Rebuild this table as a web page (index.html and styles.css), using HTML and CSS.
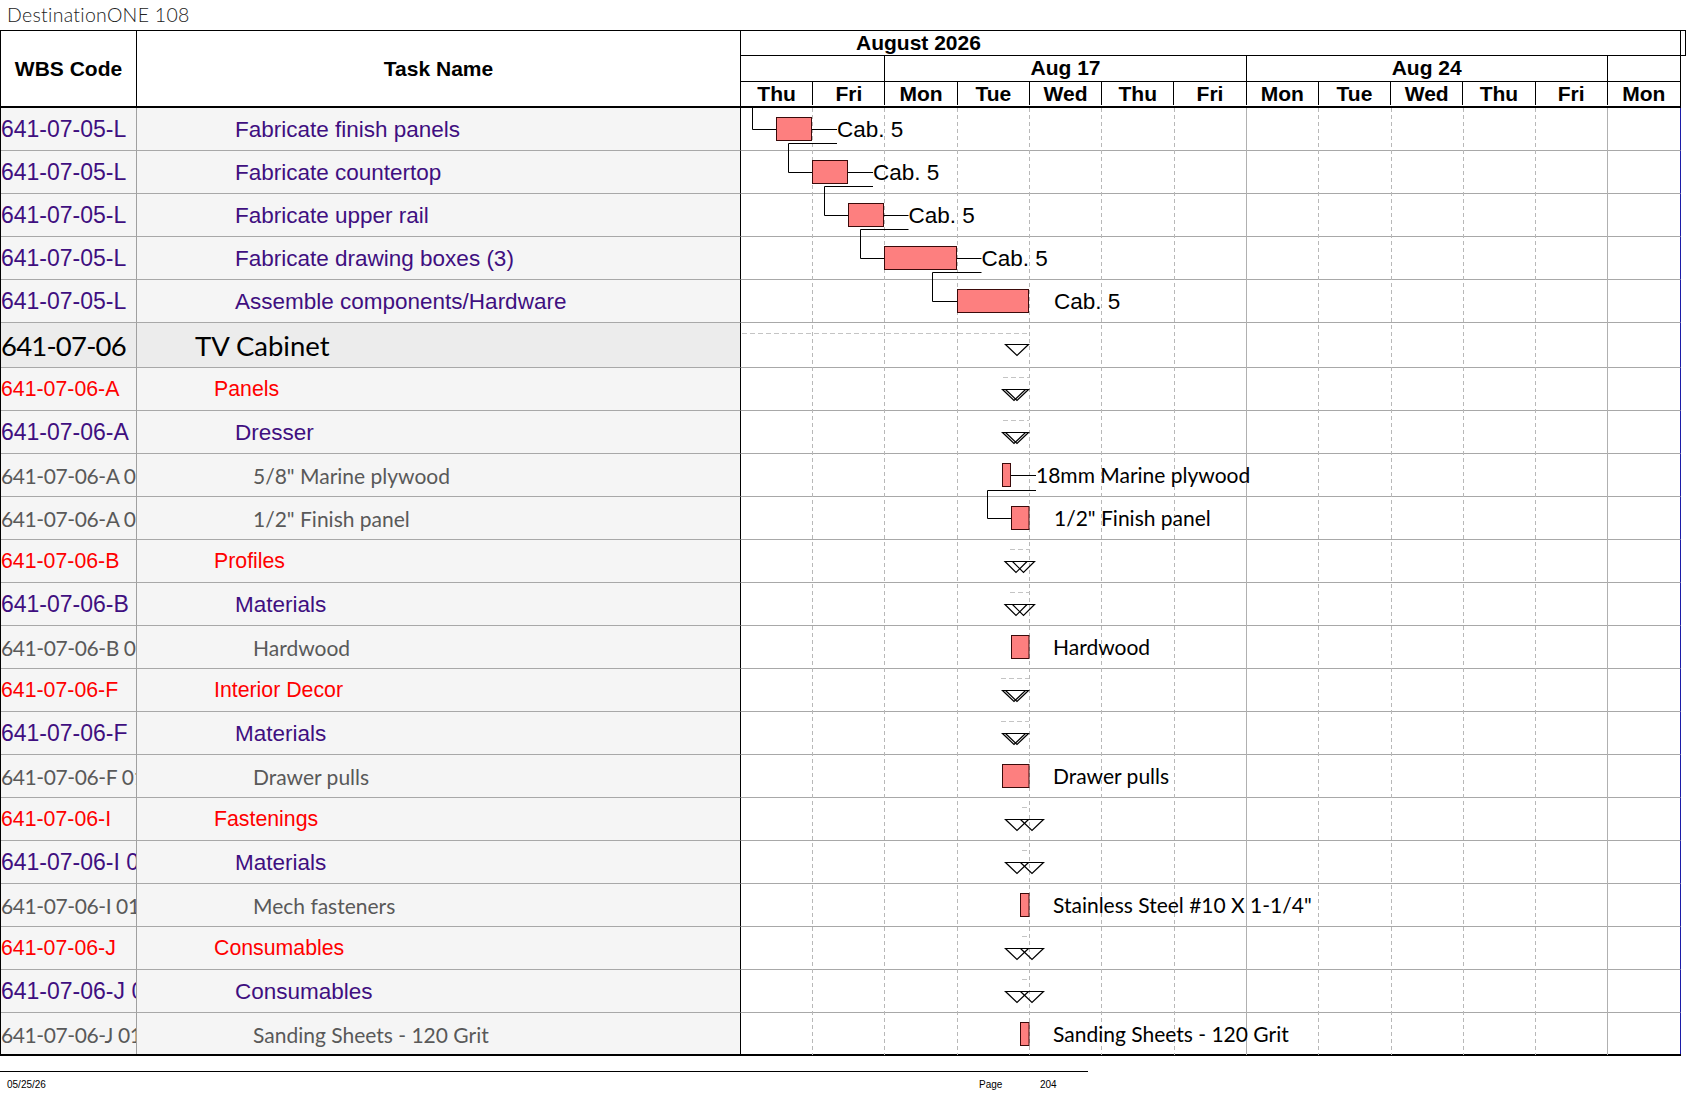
FILE: index.html
```html
<!DOCTYPE html>
<html lang="en">
<head>
<meta charset="utf-8">
<title>DestinationONE 108</title>
<link rel="stylesheet" href="styles.css">
</head>
<body>
<div class="page">
  <div class="doc-title">DestinationONE 108</div>
  <div class="sheet">
    <div class="head">
      <div class="h-cell h-wbs">WBS Code</div>
      <div class="h-cell h-task">Task Name</div>
      <div class="h-time">
        <div class="month-row"><span class="month-label">August 2026</span></div>
        <div class="week-row">
          <div class="wk span2"></div>
          <div class="wk span5">Aug 17</div>
          <div class="wk span5">Aug 24</div>
          <div class="wk span1 last"></div>
        </div>
        <div class="day-row">
          <div class="day">Thu</div><div class="day">Fri</div><div class="day">Mon</div><div class="day">Tue</div><div class="day">Wed</div><div class="day">Thu</div><div class="day">Fri</div><div class="day">Mon</div><div class="day">Tue</div><div class="day">Wed</div><div class="day">Thu</div><div class="day">Fri</div><div class="day last">Mon</div>
        </div>
      </div>
    </div>

    <div class="body">
      <div class="row"><div class="c-wbs t-p">641-07-05-L</div><div class="c-task t-p tp lv2">Fabricate finish panels</div><div class="c-gantt"></div></div>
      <div class="row"><div class="c-wbs t-p">641-07-05-L</div><div class="c-task t-p tp lv2">Fabricate countertop</div><div class="c-gantt"></div></div>
      <div class="row"><div class="c-wbs t-p">641-07-05-L</div><div class="c-task t-p tp lv2">Fabricate upper rail</div><div class="c-gantt"></div></div>
      <div class="row"><div class="c-wbs t-p">641-07-05-L</div><div class="c-task t-p tp lv2">Fabricate drawing boxes (3)</div><div class="c-gantt"></div></div>
      <div class="row"><div class="c-wbs t-p">641-07-05-L</div><div class="c-task t-p tp lv2">Assemble components/Hardware</div><div class="c-gantt"></div></div>
      <div class="row tv"><div class="c-wbs t-tv wtv">641-07-06</div><div class="c-task t-tv lv0">TV Cabinet</div><div class="c-gantt"></div></div>
      <div class="row"><div class="c-wbs t-r">641-07-06-A</div><div class="c-task t-r lv1">Panels</div><div class="c-gantt"></div></div>
      <div class="row"><div class="c-wbs t-p">641-07-06-A</div><div class="c-task t-p tp lv2">Dresser</div><div class="c-gantt"></div></div>
      <div class="row"><div class="c-wbs t-g wg">641-07-06-A 01</div><div class="c-task t-g lv3">5/8" Marine plywood</div><div class="c-gantt"></div></div>
      <div class="row"><div class="c-wbs t-g wg">641-07-06-A 02</div><div class="c-task t-g lv3">1/2" Finish panel</div><div class="c-gantt"></div></div>
      <div class="row"><div class="c-wbs t-r">641-07-06-B</div><div class="c-task t-r lv1">Profiles</div><div class="c-gantt"></div></div>
      <div class="row"><div class="c-wbs t-p">641-07-06-B</div><div class="c-task t-p tp lv2">Materials</div><div class="c-gantt"></div></div>
      <div class="row"><div class="c-wbs t-g wg">641-07-06-B 01</div><div class="c-task t-g lv3">Hardwood</div><div class="c-gantt"></div></div>
      <div class="row"><div class="c-wbs t-r">641-07-06-F</div><div class="c-task t-r lv1">Interior Decor</div><div class="c-gantt"></div></div>
      <div class="row"><div class="c-wbs t-p">641-07-06-F</div><div class="c-task t-p tp lv2">Materials</div><div class="c-gantt"></div></div>
      <div class="row"><div class="c-wbs t-g wg">641-07-06-F 01</div><div class="c-task t-g lv3">Drawer pulls</div><div class="c-gantt"></div></div>
      <div class="row"><div class="c-wbs t-r">641-07-06-I</div><div class="c-task t-r lv1">Fastenings</div><div class="c-gantt"></div></div>
      <div class="row"><div class="c-wbs t-p">641-07-06-I 01</div><div class="c-task t-p tp lv2">Materials</div><div class="c-gantt"></div></div>
      <div class="row"><div class="c-wbs t-g wg">641-07-06-I 01</div><div class="c-task t-g lv3">Mech fasteners</div><div class="c-gantt"></div></div>
      <div class="row"><div class="c-wbs t-r">641-07-06-J</div><div class="c-task t-r lv1">Consumables</div><div class="c-gantt"></div></div>
      <div class="row"><div class="c-wbs t-p">641-07-06-J 01</div><div class="c-task t-p tp lv2">Consumables</div><div class="c-gantt"></div></div>
      <div class="row last"><div class="c-wbs t-g wg">641-07-06-J 01</div><div class="c-task t-g lv3">Sanding Sheets - 120 Grit</div><div class="c-gantt"></div></div>

      <svg class="chart" viewBox="741 108 940 947" width="940" height="947" xmlns="http://www.w3.org/2000/svg">
        <g class="vgrid">
          <line class="dash" x1="812.5" y1="108" x2="812.5" y2="1055"/>
          <line class="dash" x1="884.5" y1="108" x2="884.5" y2="1055"/>
          <line class="dash" x1="957.5" y1="108" x2="957.5" y2="1055"/>
          <line class="dash" x1="1029.5" y1="108" x2="1029.5" y2="1055"/>
          <line class="dash" x1="1101.5" y1="108" x2="1101.5" y2="1055"/>
          <line class="dash" x1="1174.5" y1="108" x2="1174.5" y2="1055"/>
          <line class="solid" x1="1246.5" y1="108" x2="1246.5" y2="1055"/>
          <line class="dash" x1="1318.5" y1="108" x2="1318.5" y2="1055"/>
          <line class="dash" x1="1391.5" y1="108" x2="1391.5" y2="1055"/>
          <line class="dash" x1="1463.5" y1="108" x2="1463.5" y2="1055"/>
          <line class="dash" x1="1535.5" y1="108" x2="1535.5" y2="1055"/>
          <line class="solid" x1="1607.5" y1="108" x2="1607.5" y2="1055"/>
        </g>

        <g class="summ">
          <line x1="742" y1="333.5" x2="1029" y2="333.5"/>
          <line x1="1003" y1="377.5" x2="1029" y2="377.5"/>
          <line x1="1003" y1="420.5" x2="1029" y2="420.5"/>
          <line x1="1010" y1="549.5" x2="1030" y2="549.5"/>
          <line x1="1010" y1="592.5" x2="1030" y2="592.5"/>
          <line x1="1001" y1="678.5" x2="1029" y2="678.5"/>
          <line x1="1001" y1="721.5" x2="1029" y2="721.5"/>
          <line x1="1022" y1="807.5" x2="1029" y2="807.5"/>
          <line x1="1022" y1="850.5" x2="1029" y2="850.5"/>
          <line x1="1022" y1="936.5" x2="1029" y2="936.5"/>
          <line x1="1022" y1="979.5" x2="1029" y2="979.5"/>
        </g>

        <g class="links">
          <polyline points="752.5,108 752.5,129.5 776,129.5"/>
          <polyline points="812,129.5 837,129.5"/>
          <polyline points="837,143.5 788.5,143.5 788.5,172.5 812,172.5"/>
          <polyline points="848,172.5 873,172.5"/>
          <polyline points="873,186.5 824.5,186.5 824.5,215.5 848,215.5"/>
          <polyline points="884,215.5 908.5,215.5"/>
          <polyline points="908.5,229.5 860.5,229.5 860.5,258.5 884,258.5"/>
          <polyline points="957,258.5 981.5,258.5"/>
          <polyline points="981.5,272.5 932.5,272.5 932.5,301.5 957,301.5"/>
          <polyline points="1011,475.5 1036,475.5"/>
          <polyline points="1036,490.5 987.5,490.5 987.5,518.5 1011,518.5"/>
        </g>

        <g class="bars">
          <rect x="776.5" y="117.5" width="35" height="23"/>
          <rect x="812.5" y="160.5" width="35" height="23"/>
          <rect x="848.5" y="203.5" width="35" height="23"/>
          <rect x="884.5" y="246.5" width="72" height="23"/>
          <rect x="957.5" y="289.5" width="71" height="23"/>
          <rect x="1002.5" y="463.5" width="8" height="23"/>
          <rect x="1011.5" y="506.5" width="17.5" height="23"/>
          <rect x="1011.5" y="635.5" width="17.5" height="23"/>
          <rect x="1002.5" y="764.5" width="26.5" height="23"/>
          <rect x="1020.5" y="893.5" width="8.5" height="23"/>
          <rect x="1020.5" y="1022.5" width="8.5" height="23"/>
        </g>

        <g class="ms">
          <polygon points="1005.5,344.5 1028.5,344.5 1017,355.5"/>
          <polygon points="1002.5,389.5 1025.5,389.5 1014,400.5"/>
          <polygon points="1005.5,389.5 1028.5,389.5 1017,400.5"/>
          <polygon points="1002.5,432.5 1025.5,432.5 1014,443.5"/>
          <polygon points="1005.5,432.5 1028.5,432.5 1017,443.5"/>
          <polygon points="1005,561.5 1027,561.5 1016,572.5"/>
          <polygon points="1012.5,561.5 1034.5,561.5 1023.5,572.5"/>
          <polygon points="1005,604.5 1027,604.5 1016,615.5"/>
          <polygon points="1012.5,604.5 1034.5,604.5 1023.5,615.5"/>
          <polygon points="1002.5,690.5 1025.5,690.5 1014,701.5"/>
          <polygon points="1005.5,690.5 1028.5,690.5 1017,701.5"/>
          <polygon points="1002.5,733.5 1025.5,733.5 1014,744.5"/>
          <polygon points="1005.5,733.5 1028.5,733.5 1017,744.5"/>
          <polygon points="1005.5,819.5 1028.5,819.5 1017,830.5"/>
          <polygon points="1020.5,819.5 1043.5,819.5 1032,830.5"/>
          <polygon points="1005.5,862.5 1028.5,862.5 1017,873.5"/>
          <polygon points="1020.5,862.5 1043.5,862.5 1032,873.5"/>
          <polygon points="1005.5,948.5 1028.5,948.5 1017,959.5"/>
          <polygon points="1020.5,948.5 1043.5,948.5 1032,959.5"/>
          <polygon points="1005.5,991.5 1028.5,991.5 1017,1002.5"/>
          <polygon points="1020.5,991.5 1043.5,991.5 1032,1002.5"/>
        </g>

        <g class="lbl-a">
          <text x="837" y="136.5">Cab. 5</text>
          <text x="873" y="179.5">Cab. 5</text>
          <text x="908.5" y="222.5">Cab. 5</text>
          <text x="981.5" y="265.5">Cab. 5</text>
          <text x="1054" y="308.5">Cab. 5</text>
        </g>
        <g class="lbl-c">
          <text x="1036" y="483">18mm Marine plywood</text>
          <text x="1054" y="526">1/2" Finish panel</text>
          <text x="1053" y="655">Hardwood</text>
          <text x="1053" y="784">Drawer pulls</text>
          <text x="1053" y="913">Stainless Steel #10 X 1-1/4"</text>
          <text x="1053" y="1042">Sanding Sheets - 120 Grit</text>
        </g>
      </svg>
    </div>
  </div>
  <div class="footer">
    <span class="f-date">05/25/26</span>
    <span class="f-page">Page</span>
    <span class="f-num">204</span>
  </div>
</div>
</body>
</html>
```
FILE: styles.css
```css
* { box-sizing: border-box; }

body {
  margin: 0;
  background: #ffffff;
  color: #000;
  font-family: "Liberation Sans", Arial, sans-serif;
}

.page {
  width: 1687px;
}

.doc-title {
  height: 30px;
  line-height: 30px;
  padding-left: 7px;
  font-family: Lato, "Noto Sans", sans-serif;
  font-weight: 300;
  font-size: 19.5px;
  letter-spacing: 0.3px;
  color: #222;
}

.sheet {
  width: 1681px;
  border-left: 1px solid #000;
  border-bottom: 2px solid #000;
}

/* ---------- header ---------- */
.head {
  display: grid;
  grid-template-columns: 136px 604px 940px;
  border-bottom: 2px solid #000;
  font-family: "Liberation Sans", Arial, sans-serif;
  font-weight: bold;
  font-size: 21px;
}

.h-cell {
  display: flex;
  align-items: center;
  justify-content: center;
  border-top: 1px solid #000;
  border-right: 1px solid #000;
  height: 76px;
  padding-top: 1px;
}

.h-time {
  border-right: 1px solid #000;
}

.month-row {
  height: 26px;
  margin-right: -6px;
  border-top: 1px solid #000;
  border-bottom: 1px solid #000;
  border-right: 1px solid #000;
  padding-left: 115px;
  line-height: 24px;
}

.week-row,
.day-row {
  display: grid;
  grid-template-columns: repeat(13, 1fr);
}

.week-row {
  height: 26px;
  border-bottom: 1px solid #000;
}

.wk {
  border-right: 1px solid #000;
  text-align: center;
  line-height: 24px;
}
.wk.last { border-right: 0; }
.span1 { grid-column: span 1; }
.span2 { grid-column: span 2; }
.span5 { grid-column: span 5; }

.day-row {
  height: 23px;
}

.day {
  border-right: 1px solid #000;
  text-align: center;
  line-height: 23px;
}
.day.last { border-right: 0; }

/* ---------- body ---------- */
.body {
  position: relative;
}

.row {
  display: grid;
  grid-template-columns: 136px 604px 940px;
  height: 43px;
}
.row.tv { height: 45px; }
.row.last { height: 41px; }

.c-wbs,
.c-task {
  display: flex;
  align-items: center;
  white-space: nowrap;
  overflow: hidden;
  background: #f5f5f5;
  border-bottom: 1px solid #a8a8a8;
  padding-top: 1px;
}

.c-wbs {
  border-right: 1px solid #a0a0a0;
}

.c-task {
  border-right: 1px solid #000;
}

.c-gantt {
  background: #ffffff;
  border-bottom: 1px solid #a8a8a8;
  border-right: 1px solid #1c1ca8;
}

.row.tv .c-wbs,
.row.tv .c-task { background: #ececec; }

.row.last .c-wbs,
.row.last .c-task,
.row.last .c-gantt { border-bottom: 0; }

.lv0 { padding-left: 58px; }
.lv1 { padding-left: 77px; }
.lv2 { padding-left: 98px; }
.lv3 { padding-left: 116px; }

.t-p {
  color: #3f0f80;
  font-family: "Liberation Sans", Arial, sans-serif;
  font-size: 23px;
}
.t-p.tp { font-size: 22.5px; }
.t-r {
  color: #ff0000;
  font-family: "Liberation Sans", Arial, sans-serif;
  font-size: 21.3px;
}
.t-g {
  color: #595959;
  font-family: Lato, "Noto Sans", sans-serif;
  font-size: 21px;
}
.t-g.wg { letter-spacing: -0.4px; }
.t-tv {
  color: #000;
  font-family: Lato, "Noto Sans", sans-serif;
  font-size: 27.5px;
}
.t-tv.wtv { letter-spacing: -0.8px; }

/* ---------- gantt canvas ---------- */
.chart {
  position: absolute;
  left: 740px;
  top: 0;
  overflow: visible;
}

.vgrid line { stroke-width: 1; }
.vgrid .dash { stroke: #b8b8b8; stroke-dasharray: 4 3; }
.vgrid .solid { stroke: #b0b0b0; }

.summ line {
  stroke: #c4c4c4;
  stroke-width: 1;
  stroke-dasharray: 5 3;
}

.links polyline {
  fill: none;
  stroke: #000;
  stroke-width: 1;
}

.bars rect {
  fill: #fd7f7f;
  stroke: #3a0a0a;
  stroke-width: 1;
}

.ms polygon {
  fill: none;
  stroke: #000;
  stroke-width: 1.2;
}

.lbl-a text {
  font-family: "Liberation Sans", Arial, sans-serif;
  font-size: 22.5px;
  fill: #000;
}
.lbl-c text {
  font-family: Lato, "Noto Sans", sans-serif;
  font-size: 21px;
  fill: #000;
}

/* ---------- footer ---------- */
.footer {
  width: 1088px;
  margin-top: 15px;
  border-top: 1px solid #000;
  display: grid;
  grid-template-columns: 972px 61px auto;
  padding-left: 7px;
  height: 26px;
  align-items: center;
  font-family: "Liberation Sans", Arial, sans-serif;
  font-size: 10px;
  color: #000;
}
```
